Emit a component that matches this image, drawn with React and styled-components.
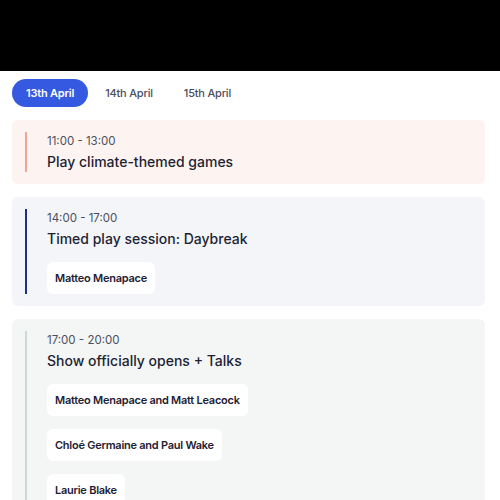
import React from 'react';
import styled, { createGlobalStyle } from 'styled-components';

const GlobalStyle = createGlobalStyle`
  body {
    margin: 0;
    background: #fff;
    font-family: Inter, "Noto Sans", sans-serif;
    color: #1e2033;
  }
`;

const TopBar = styled.div`
  height: 71px;
  background: #000;
`;

const Tabs = styled.div`
  display: flex;
  gap: 3px;
  padding: 8px 12px 13px;
`;

const Tab = styled.button`
  height: 28px;
  padding: 0 14px;
  border: none;
  border-radius: 14px;
  font-family: inherit;
  font-size: 11px;
  letter-spacing: -0.2px;
  font-weight: ${(p) => (p.$active ? 600 : 500)};
  background: ${(p) => (p.$active ? '#3559e0' : 'transparent')};
  color: ${(p) => (p.$active ? '#fff' : '#4a4e5e')};
`;

const List = styled.div`
  display: flex;
  flex-direction: column;
  gap: 13px;
  padding: 0 15px 0 12px;
`;

const Card = styled.div`
  display: flex;
  padding: 12px 13px;
  border-radius: 6px;
  background: ${(p) => p.$bg};
`;

const Line = styled.div`
  width: 2px;
  flex-shrink: 0;
  background: ${(p) => p.$color};
`;

const Body = styled.div`
  display: flex;
  flex-direction: column;
  align-items: flex-start;
  margin-left: 20px;
`;

const Time = styled.div`
  font-size: 11.5px;
  line-height: 18px;
  color: #4b4f5c;
`;

const Title = styled.div`
  margin-top: 2px;
  font-size: 14px;
  line-height: 20px;
  font-weight: 500;
  color: #1e1f33;
`;

const Chips = styled.div`
  display: flex;
  flex-direction: column;
  align-items: flex-start;
  gap: 13px;
  margin-top: 13px;
`;

const Chip = styled.div`
  height: 32px;
  display: flex;
  align-items: center;
  padding: 0 8px;
  background: #fff;
  border-radius: 6px;
  font-size: 11px;
  letter-spacing: -0.25px;
  font-weight: 600;
  color: #1e2033;
`;

const sessions = [
  {
    time: '11:00 - 13:00',
    title: 'Play climate-themed games',
    bg: '#fdf4f2',
    line: '#f3a291',
    people: [],
  },
  {
    time: '14:00 - 17:00',
    title: 'Timed play session: Daybreak',
    bg: '#f4f5f9',
    line: '#1e2f8a',
    people: ['Matteo Menapace'],
  },
  {
    time: '17:00 - 20:00',
    title: 'Show officially opens + Talks',
    bg: '#f3f6f4',
    line: '#c9dbd3',
    people: ['Matteo Menapace and Matt Leacock', 'Chloé Germaine and Paul Wake', 'Laurie Blake'],
  },
];

const App = () => {
  return (
    <>
      <GlobalStyle />
      <TopBar />
      <Tabs>
        <Tab $active>13th April</Tab>
        <Tab>14th April</Tab>
        <Tab>15th April</Tab>
      </Tabs>
      <List>
        {sessions.map((s) => (
          <Card key={s.time} $bg={s.bg}>
            <Line $color={s.line} />
            <Body>
              <Time>{s.time}</Time>
              <Title>{s.title}</Title>
              {s.people.length > 0 && (
                <Chips>
                  {s.people.map((p) => (
                    <Chip key={p}>{p}</Chip>
                  ))}
                </Chips>
              )}
            </Body>
          </Card>
        ))}
      </List>
    </>
  );
};

export default App;
